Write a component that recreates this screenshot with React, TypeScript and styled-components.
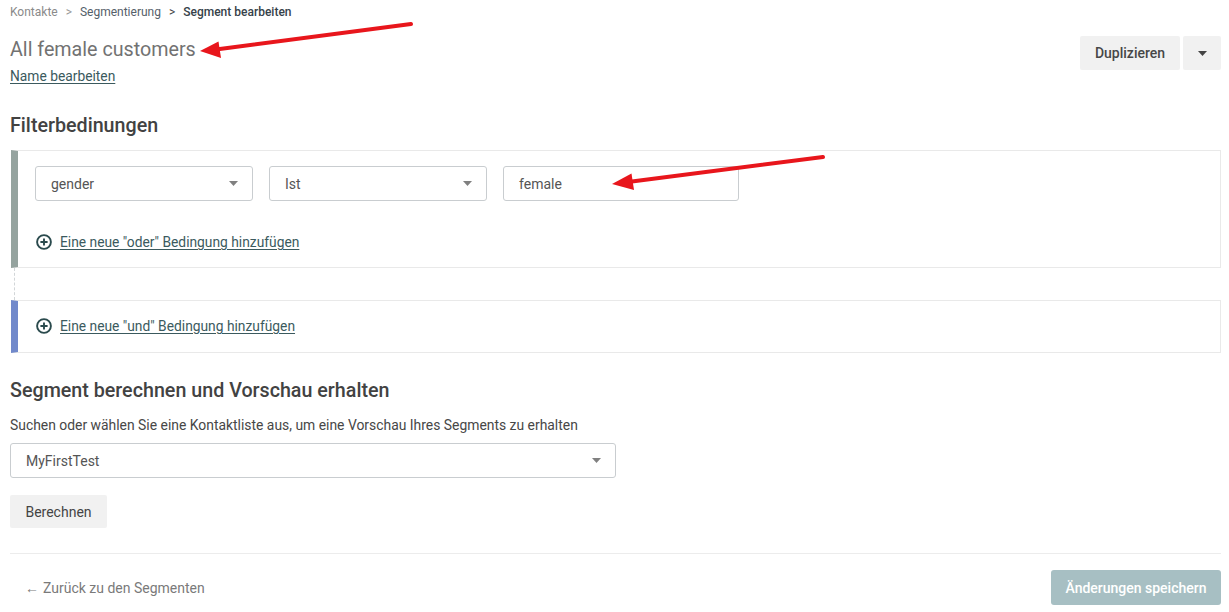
import React from "react";
import styled, { createGlobalStyle } from "styled-components";

const Global = createGlobalStyle`
  html, body { margin: 0; padding: 0; background: #fff; }
  body { font-family: Roboto, "Liberation Sans", Arial, sans-serif; color: #333; }
  * { box-sizing: border-box; }
`;

const Page = styled.div`
  position: relative;
  width: 1229px;
  height: 612px;
  padding: 4px 8px 0 10px;
  overflow: hidden;
`;

const Breadcrumb = styled.nav`
  display: flex;
  align-items: center;
  gap: 8px;
  font-size: 12px;
  line-height: 16px;
  height: 16px;
`;

const Crumb = styled.span<{ $level: number }>`
  color: ${(p) => (p.$level === 0 ? "#8a8a8a" : p.$level === 1 ? "#55606a" : "#36424a")};
  font-weight: ${(p) => (p.$level === 2 ? 500 : 400)};
`;

const Sep = styled.span<{ $dark?: boolean }>`
  color: ${(p) => (p.$dark ? "#444" : "#999")};
  font-size: 12px;
`;

const HeaderRow = styled.div`
  display: flex;
  justify-content: space-between;
  align-items: flex-start;
  margin-top: 16px;
`;

const TitleBlock = styled.div`
  display: flex;
  flex-direction: column;
  padding-top: 2px;
`;

const Title = styled.h1`
  margin: 0;
  font-size: 19.7px;
  line-height: 24px;
  font-weight: 400;
  color: #727272;
`;

const LinkText = styled.a`
  font-size: 13.8px;
  line-height: 16px;
  color: #3b5a5e;
  text-decoration: underline;
  text-underline-offset: 2px;
  cursor: pointer;
`;

const NameLink = styled(LinkText)`
  margin-top: 6px;
`;

const ButtonGroup = styled.div`
  display: flex;
  gap: 3px;
`;

const GrayButton = styled.button<{ $w?: number }>`
  height: 34px;
  ${(p) => (p.$w ? `width: ${p.$w}px;` : "padding: 0 16px;")}
  border: none;
  border-radius: 2px;
  background: #f1f1f1;
  color: #474747;
  font-family: inherit;
  font-size: 14px;
  font-weight: 500;
  display: flex;
  align-items: center;
  justify-content: center;
`;

const SectionTitle = styled.h2<{ $mt: number }>`
  margin: ${(p) => p.$mt}px 0 0 0;
  font-size: 19.7px;
  line-height: 24px;
  font-weight: 500;
  color: #424242;
`;

const Card = styled.div<{ $accent: string; $mt: number }>`
  margin-top: ${(p) => p.$mt}px;
  margin-left: 1px;
  border: 1px solid #e9e9e9;
  border-left: 7px solid ${(p) => p.$accent};
  padding: 15px 20px 16px 17px;
  display: flex;
  flex-direction: column;
`;

const ConditionRow = styled.div`
  display: flex;
  gap: 16px;
  margin-bottom: 32px;
`;

const Field = styled.div<{ $w: number }>`
  width: ${(p) => p.$w}px;
  height: 35px;
  flex: none;
  border: 1px solid #c9cdd0;
  border-radius: 3px;
  display: flex;
  align-items: center;
  justify-content: space-between;
  padding: 0 14px 0 15px;
  font-size: 14px;
  color: #555;
  background: #fff;
`;

const Caret = () => (
  <svg width="9" height="5" viewBox="0 0 9 5">
    <path d="M0 0 L9 0 L4.5 5 Z" fill="#808080" />
  </svg>
);

const AddLink = styled.div`
  display: flex;
  align-items: center;
  gap: 8px;
  height: 18px;
  margin-left: 1px;
`;

const PlusIcon = () => (
  <svg width="16" height="16" viewBox="0 0 16 16">
    <circle cx="8" cy="8" r="6.9" fill="none" stroke="#2a4a4d" strokeWidth="1.9" />
    <path d="M8 4.4 V11.6 M4.4 8 H11.6" stroke="#2a4a4d" strokeWidth="1.9" />
  </svg>
);

const Connector = styled.div`
  height: 32px;
  margin-left: 4px;
  border-left: 1px dashed #d2d6d8;
`;

const SecondCard = styled(Card)`
  padding-top: 16px;
  padding-bottom: 17px;
`;

const Description = styled.p`
  margin: 13px 0 0 0;
  font-size: 13.9px;
  line-height: 18px;
  color: #474747;
`;

const WideSelect = styled(Field)`
  margin-top: 9px;
`;

const CalcButton = styled(GrayButton)`
  margin-top: 17px;
  height: 33px;
  font-weight: 400;
  color: #444;
`;

const Divider = styled.hr`
  margin: 25px 0 0 0;
  border: none;
  border-top: 1px solid #ececec;
`;

const Footer = styled.div`
  display: flex;
  justify-content: space-between;
  align-items: center;
  margin-top: 16px;
  padding-left: 15px;
`;

const BackLink = styled.span`
  font-size: 14px;
  color: #7a7a7a;
  display: flex;
  align-items: center;
  gap: 4px;
`;

const SaveButton = styled.button`
  height: 35px;
  width: 170px;
  border: none;
  border-radius: 3px;
  background: #a7bfc3;
  color: #fff;
  font-family: inherit;
  font-size: 14px;
  font-weight: 500;
`;

const Overlay = styled.svg`
  position: absolute;
  left: 0;
  top: 0;
  pointer-events: none;
`;

export default function App() {
  return (
    <>
      <Global />
      <Page>
        <Breadcrumb>
          <Crumb $level={0}>Kontakte</Crumb>
          <Sep>&gt;</Sep>
          <Crumb $level={1}>Segmentierung</Crumb>
          <Sep $dark>&gt;</Sep>
          <Crumb $level={2}>Segment bearbeiten</Crumb>
        </Breadcrumb>

        <HeaderRow>
          <TitleBlock>
            <Title>All female customers</Title>
            <NameLink>Name bearbeiten</NameLink>
          </TitleBlock>
          <ButtonGroup>
            <GrayButton $w={100}>Duplizieren</GrayButton>
            <GrayButton $w={38}>
              <svg width="9" height="5" viewBox="0 0 9 5">
                <path d="M0 0 L9 0 L4.5 5 Z" fill="#444" />
              </svg>
            </GrayButton>
          </ButtonGroup>
        </HeaderRow>

        <SectionTitle $mt={30}>Filterbedinungen</SectionTitle>

        <Card $accent="#95a39f" $mt={12}>
          <ConditionRow>
            <Field $w={218}>
              gender
              <Caret />
            </Field>
            <Field $w={218}>
              Ist
              <Caret />
            </Field>
            <Field $w={236}>female</Field>
          </ConditionRow>
          <AddLink>
            <PlusIcon />
            <LinkText>Eine neue "oder" Bedingung hinzufügen</LinkText>
          </AddLink>
        </Card>
        <Connector />
        <SecondCard $accent="#7189cb" $mt={0}>
          <AddLink>
            <PlusIcon />
            <LinkText>Eine neue "und" Bedingung hinzufügen</LinkText>
          </AddLink>
        </SecondCard>

        <SectionTitle $mt={26}>Segment berechnen und Vorschau erhalten</SectionTitle>
        <Description>
          Suchen oder wählen Sie eine Kontaktliste aus, um eine Vorschau Ihres Segments zu erhalten
        </Description>
        <WideSelect $w={606}>
          MyFirstTest
          <Caret />
        </WideSelect>
        <CalcButton $w={97}>Berechnen</CalcButton>

        <Divider />
        <Footer>
          <BackLink>
            <span>←</span>
            <span>Zurück zu den Segmenten</span>
          </BackLink>
          <SaveButton>Änderungen speichern</SaveButton>
        </Footer>

        <Overlay width="1229" height="612" viewBox="0 0 1229 612">
          <line x1="411" y1="24" x2="216" y2="49.5" stroke="#e8161c" strokeWidth="4" strokeLinecap="round" />
          <polygon points="200,51 221,58 218.5,41.5" fill="#e8161c" />
          <line x1="823" y1="157" x2="628" y2="182" stroke="#e8161c" strokeWidth="4" strokeLinecap="round" />
          <polygon points="612,184 634,190 631.5,173.5" fill="#e8161c" />
        </Overlay>
      </Page>
    </>
  );
}
